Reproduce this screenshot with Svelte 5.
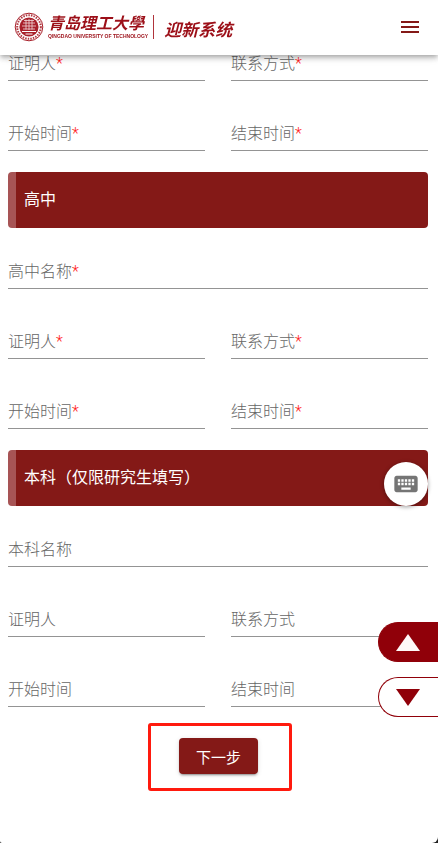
<script lang="ts">
  interface Field {
    id: string;
    label: string;
    required?: boolean;
    wide?: boolean;
  }

  interface Section {
    title: string;
    fields: Field[];
  }

  function period(prefix: string, required: boolean): Field[] {
    return [
      { id: `${prefix}-witness`, label: '证明人', required },
      { id: `${prefix}-contact`, label: '联系方式', required },
      { id: `${prefix}-start`, label: '开始时间', required },
      { id: `${prefix}-end`, label: '结束时间', required }
    ];
  }

  const sections: Section[] = [
    { title: '', fields: period('junior', true) },
    {
      title: '高中',
      fields: [{ id: 'senior-name', label: '高中名称', required: true, wide: true }, ...period('senior', true)]
    },
    {
      title: '本科（仅限研究生填写）',
      fields: [{ id: 'college-name', label: '本科名称', wide: true }, ...period('college', false)]
    }
  ];

  let values: Record<string, string> = $state({});

  function scrollPage(direction: number) {
    window.scrollBy({ top: direction * window.innerHeight, behavior: 'smooth' });
  }
</script>

<div class="page">
  <header>
    <div class="brand">
      <svg class="seal" viewBox="0 0 30 30" aria-hidden="true">
        <circle cx="15" cy="15" r="13.8" fill="#fff" stroke="#a8202a" stroke-width="1" />
        <circle cx="15" cy="15" r="11.800" fill="none" stroke="#b23a42" stroke-width="2" stroke-dasharray="1.500 1.100" />
        <circle cx="15" cy="15" r="9.600" fill="#a8202a" />
        <path d="M10 8.500h10M9 11h12M8 14h14M9 17h12M12 7.500v10M15 7v11M18 7.500v10" fill="none" stroke="#f3d9da" stroke-width=".8" />
        <path d="M8 19.500h14M11.500 22h7" fill="none" stroke="#fff" stroke-width="1" />
      </svg>
      <div class="school">
        <span class="school-name">青岛理工大學</span>
        <span class="school-latin">QINGDAO UNIVERSITY OF TECHNOLOGY</span>
      </div>
      <span class="system">迎新系统</span>
    </div>
    <button class="menu" type="button" aria-label="菜单">
      <svg viewBox="0 0 24 24" aria-hidden="true"><path d="M3 6h18v2H3zM3 11h18v2H3zM3 16h18v2H3z" /></svg>
    </button>
  </header>

  <form onsubmit={(event) => event.preventDefault()}>
    {#each sections as section}
      {#if section.title}
        <h2>{section.title}</h2>
      {/if}
      <div class="fields">
        {#each section.fields as field (field.id)}
          <div class="field" class:wide={field.wide}>
            <input id={field.id} type="text" placeholder=" " required={field.required} bind:value={values[field.id]} />
            <label for={field.id}>{field.label}{#if field.required}<span class="star">*</span>{/if}</label>
          </div>
        {/each}
      </div>
    {/each}

    <div class="actions">
      <div class="highlight">
        <button class="next" type="submit">下一步</button>
      </div>
    </div>
  </form>

  <button class="keyboard" type="button" aria-label="键盘">
    <svg viewBox="0 0 24 24" aria-hidden="true">
      <path
        d="M20 5H4c-1.100 0-1.990.9-1.990 2L2 17c0 1.100.9 2 2 2h16c1.100 0 2-.9 2-2V7c0-1.100-.9-2-2-2zm-9 3h2v2h-2V8zm0 3h2v2h-2v-2zM8 8h2v2H8V8zm0 3h2v2H8v-2zm-1 2H5v-2h2v2zm0-3H5V8h2v2zm9 7H8v-2h8v2zm0-4h-2v-2h2v2zm0-3h-2V8h2v2zm3 3h-2v-2h2v2zm0-3h-2V8h2v2z"
      />
    </svg>
  </button>

  <div class="pager">
    <button class="up" type="button" aria-label="向上" onclick={() => scrollPage(-1)}>
      <svg viewBox="0 0 24 17" aria-hidden="true"><path d="M12 0l12 17H0z" /></svg>
    </button>
    <button class="down" type="button" aria-label="向下" onclick={() => scrollPage(1)}>
      <svg viewBox="0 0 24 17" aria-hidden="true"><path d="M0 0h24L12 17z" /></svg>
    </button>
  </div>
</div>

<style>
  :global(body) { background: #222; }
  .page {
    --primary: #841917;
    --accent: #900009;
    box-sizing: border-box;
    min-height: 100vh;
    border-radius: 0 0 6px 2px;
    background: #fff;
    font-family: Roboto, "Noto Sans CJK SC", sans-serif;
    font-size: 16px;
  }
  button { border: 0; padding: 0; cursor: pointer; font-family: inherit; }
  svg { display: block; }

  header {
    position: fixed;
    z-index: 2;
    top: 0;
    left: 0;
    right: 0;
    display: flex;
    align-items: center;
    justify-content: space-between;
    box-sizing: border-box;
    height: 55px;
    padding: 0 16px 2px 14px;
    background: #fff;
    box-shadow: 0 2px 4px -1px rgba(0, 0, 0, .2), 0 4px 5px rgba(0, 0, 0, .14), 0 1px 10px rgba(0, 0, 0, .12);
  }
  .brand { display: flex; align-items: center; color: #9c0f18; white-space: nowrap; }
  .seal { width: 30px; height: 30px; }
  .school { display: flex; flex-direction: column; padding: 0 5px 0 4px; border-right: 1px solid #b0343b; }
  .school-name { font-size: 16px; font-style: italic; font-weight: 700; line-height: 18px; }
  .school-latin { font: 700 5px/6px "Liberation Sans", sans-serif; }
  .system { padding: 6px 0 0 10px; font-size: 17px; font-style: italic; font-weight: 700; line-height: 20px; }
  .menu { background: none; }
  .menu svg { width: 24px; height: 24px; fill: var(--primary); }

  form { padding: 32px 10px 16px 8px; }
  h2 {
    margin: 0 0 12px;
    border-left: 8px solid #a75455;
    border-radius: 4px;
    background: var(--primary);
    color: #fff;
    font-size: 16px;
    font-weight: 400;
    line-height: 24px;
    padding: 16px 8px;
  }
  .fields { display: grid; grid-template-columns: 1fr 1fr; column-gap: 26px; }
  .field { display: grid; height: 49px; padding-bottom: 21px; align-items: end; }
  .wide { grid-column: 1 / -1; }
  input,
  label { grid-area: 1 / 1; }
  input {
    box-sizing: border-box;
    width: 100%;
    height: 32px;
    border: 0;
    border-bottom: 1px solid #949494;
    border-radius: 0;
    outline: none;
    background: none;
    font: inherit;
    padding: 0;
  }
  input:focus { border-color: var(--primary); }
  label { color: #666; font-weight: 300; line-height: 20px; padding-bottom: 7px; pointer-events: none; }
  input:not(:placeholder-shown) + label { visibility: hidden; }
  .star { color: #ff1a1a; }

  .actions { display: flex; justify-content: center; padding: 10px 0 0 1px; }
  .highlight { position: relative; }
  .highlight::after {
    content: "";
    position: absolute;
    inset: -15px -34px -17px -31px;
    border: 3px solid #ff1a0e;
    border-radius: 3px;
    pointer-events: none;
  }
  .next {
    display: block;
    height: 36px;
    border-radius: 4px;
    background: var(--primary);
    box-shadow: 0 3px 1px -2px rgba(0, 0, 0, .2), 0 2px 2px rgba(0, 0, 0, .14), 0 1px 5px rgba(0, 0, 0, .12);
    color: #fff;
    font-size: 15px;
    padding: 0 17px;
  }

  .keyboard {
    position: fixed;
    top: 462px;
    right: 10px;
    display: grid;
    place-items: center;
    width: 44px;
    height: 44px;
    border-radius: 50%;
    background: #fff;
    box-shadow: 0 1px 4px rgba(0, 0, 0, .4);
  }
  .keyboard svg { width: 28px; height: 28px; fill: #757575; }

  .pager { position: fixed; right: 0; bottom: 126px; display: grid; gap: 15px; }
  .pager button {
    display: flex;
    align-items: center;
    box-sizing: border-box;
    width: 60px;
    height: 40px;
    border: 1px solid var(--accent);
    border-right: 0;
    border-radius: 20px 0 0 20px;
    padding-left: 17px;
  }
  .pager svg { width: 24px; height: 17px; }
  .up { background: var(--accent); fill: #fff8f8; }
  .down { background: #fff; fill: var(--accent); }
</style>
